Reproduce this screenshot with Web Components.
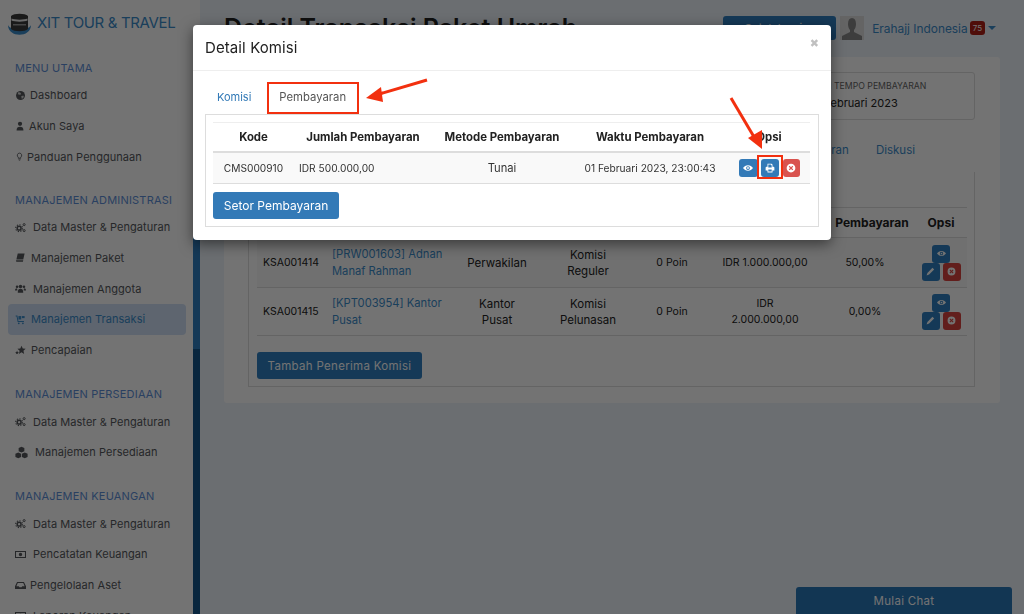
<!DOCTYPE html>
<html>
<head>
<meta charset="utf-8">
<title>Detail Komisi</title>
<style>
    html, body {margin: 0; height: 100%; overflow: hidden;}
    body {font-family: "Inter", "Liberation Sans", sans-serif; background: #fff;}
</style>
</head>
<body>
<app-shell>
    <side-bar slot="side"></side-bar>
    <top-bar slot="top"></top-bar>
    <commission-card slot="main"></commission-card>
</app-shell>
<chat-button></chat-button>
<commission-modal></commission-modal>

<script>
// font awesome style glyphs, drawn by hand
const ICONS = {
    globe: '<circle cx="8" cy="8" r="6.5"/><path fill="#fff" opacity=".75" d="M5 3l3 1 1 2-2 1-3-1zM9 9l3-1 1 2-3 3z"/>',
    user: '<circle cx="8" cy="4.500" r="3.400"/><path d="M2.500 15c0-4.500 2-6 5.500-6s5.500 1.500 5.500 6z"/>',
    bulb: '<path fill="none" stroke="currentColor" stroke-width="1.500" d="M8 2a4 4 0 0 0-2.200 7.300V11h4.400V9.300A4 4 0 0 0 8 2z"/><path d="M6 12h4v1.200H6zM6.800 14h2.400v1H6.800z"/>',
    gears: '<circle cx="6" cy="9" r="2.800" fill="none" stroke="currentColor" stroke-width="2.200"/><circle cx="6" cy="9" r="5" fill="none" stroke="currentColor" stroke-width="1.500" stroke-dasharray="1.900 2"/><circle cx="13.300" cy="3.800" r="1.500" fill="none" stroke="currentColor" stroke-width="1.400"/><circle cx="13.300" cy="12.500" r="1.500" fill="none" stroke="currentColor" stroke-width="1.400"/>',
    book: '<path d="M4 2h10l-2 9H2zM2 12h10l-.5 2H3a1 1 0 0 1-1-2z"/>',
    users: '<circle cx="8" cy="5" r="2.600"/><circle cx="3" cy="5.500" r="1.900"/><circle cx="13" cy="5.500" r="1.900"/><path d="M4 14c0-4 1.500-5.500 4-5.500s4 1.500 4 5.500zM0 11c0-2 1-3.200 3-3.200l.5 3.200zM16 11c0-2-1-3.200-3-3.200l-.5 3.200z"/>',
    cart: '<path d="M1 2h2.500l1.500 8h8v1.500H3.800L2.300 3.500H1z"/><rect x="5" y="3" width="4" height="5"/><rect x="10" y="3" width="4" height="3"/><circle cx="5.500" cy="13.500" r="1.300"/><circle cx="11.500" cy="13.500" r="1.300"/>',
    stars: '<path d="M9.500 1l1.800 4.200 4.200.4-3.200 2.900 1 4.500-3.800-2.400-3.800 2.400 1-4.500L3.500 5.600l4.200-.4z"/><path d="M3 8l.8 2 2 .2-1.500 1.300.5 2-1.800-1.100-1.800 1.100.5-2L.200 10.200l2-.2z"/>',
    cubes: '<path d="M8 1l3.500 1.500v4L8 8 4.500 6.500v-4zM4 8l3.500 1.500v4L4 15 .5 13.500v-4zM12 8l3.500 1.500v4L12 15l-3.500-1.500v-4z"/>',
    money: '<path fill-rule="evenodd" d="M0 3h16v10H0zM1.500 4.500v7h13v-7zM8 5.500a2.500 2.500 0 1 1 0 5 2.500 2.500 0 0 1 0-5z"/>',
    inbox: '<path fill-rule="evenodd" d="M3 3h10l3 6v4H0V9zM4 4.500L2 9h3.500l1 1.500h3l1-1.500H14l-2-4.500z"/>',
    eye: '<path fill-rule="evenodd" d="M8 3.500c3.500 0 6.200 2.200 8 4.500-1.800 2.300-4.500 4.500-8 4.500S1.800 10.300 0 8c1.800-2.300 4.500-4.500 8-4.500zM8 5a3 3 0 1 0 0 6 3 3 0 0 0 0-6z"/><circle cx="8" cy="8" r="1.500"/>',
    print: '<path fill-rule="evenodd" d="M4 1h6.500L12 2.500V6h1.500A1.500 1.500 0 0 1 15 7.500V12h-3v3H4v-3H1V7.500A1.500 1.500 0 0 1 2.500 6H4zM5.300 2.300V7h5.400V3.500H9.500V2.300zM5.300 10.500v3.200h5.400v-3.200z"/>',
    pencil: '<path d="M11.500 1.500l3 3-9 9L1 15l1.500-4.500z"/>',
    cross: '<path fill-rule="evenodd" d="M8 1a7 7 0 1 1 0 14A7 7 0 0 1 8 1zM5.800 4.400L4.400 5.800 6.600 8l-2.200 2.200 1.400 1.400L8 9.400l2.200 2.200 1.400-1.400L9.400 8l2.200-2.200-1.400-1.400L8 6.600z"/>'
};

class FaIcon extends HTMLElement {
    constructor() {
        super();
        this.attachShadow({ mode: 'open' });
    }
    connectedCallback() {
        var size = this.getAttribute('size') || 12;
        this.shadowRoot.innerHTML = `
<style>
    :host {display: inline-flex; width: ${size}px; height: ${size}px; flex: none;}
    svg {width: 100%; height: 100%; fill: currentColor; display: block;}
</style>
<svg viewBox="0 0 16 16">${ICONS[this.getAttribute('name')]}</svg>`
    }
}
customElements.define('fa-icon', FaIcon);

class AppShell extends HTMLElement {
    constructor() {
        super();
        this.attachShadow({ mode: 'open' });
        this.shadowRoot.innerHTML = `
<style>
    :host {display: flex; height: 614px; overflow: hidden;}
    .side {width: 193px; flex: none;}
    .strip {width: 7px; flex: none; background: linear-gradient(#fff 0, #fff 45px, #2f7fc0 45px, #2f7fc0 349px, #16568a 349px);}
    .content {flex: 1; min-width: 0; background: #eef3fa; padding: 16px 24px 0 24px; box-sizing: border-box;}
</style>
<div class="side"><slot name="side"></slot></div>
<div class="strip"></div>
<div class="content">
    <slot name="top"></slot>
    <slot name="main"></slot>
</div>`
    }
}
customElements.define('app-shell', AppShell);

class SideItem extends HTMLElement {
    constructor() {
        super();
        this.attachShadow({ mode: 'open' });
    }
    connectedCallback() {
        var active = this.hasAttribute('active');
        var gap = this.getAttribute('gap') || 7;
        this.shadowRoot.innerHTML = `
<style>
    :host {display: flex; align-items: center; height: 30.750px; margin: 0 7px 0 8px; padding-left: 7px;
        gap: ${gap}px; font-size: 11px; letter-spacing: .05px; color: ${active ? '#3b8ccb' : '#55585c'};
        background: ${active ? '#d0e0f5' : 'none'}; border-radius: 4px; white-space: nowrap;}
</style>
<fa-icon name="${this.getAttribute('icon')}" size="${this.getAttribute('size') || 11}"></fa-icon>
<span><slot></slot></span>`
    }
}
customElements.define('side-item', SideItem);

class SideBar extends HTMLElement {
    constructor() {
        super();
        this.attachShadow({ mode: 'open' });
        this.shadowRoot.innerHTML = `
<style>
    :host {display: block; height: 614px; overflow: hidden; background: #fff;}
    .brand {display: flex; align-items: center; gap: 6px; height: 45px; padding-left: 8px; color: #3b8ccb;
        font-size: 15px; letter-spacing: -.35px; white-space: nowrap;}
    .brand svg {width: 23px; height: 24px; flex: none;}
    h4 {margin: 0; font-size: 11px; font-weight: 400; color: #5d8fd8; letter-spacing: .2px; padding-left: 15px;
        line-height: 16px; white-space: nowrap;}
    .group {margin-bottom: 20.600px;}
    .group h4 {margin-bottom: 4px;}
    .first {margin-top: 15px; margin-bottom: 19.600px;}
</style>
<div class="brand">
    <svg viewBox="0 0 23 24">
        <path fill="#3b8ccb" d="M0 14c0 13 23 13 23 0-2 6-21 6-23 0z"/>
        <path fill="#3a3a3a" d="M3 5c3-3 14-3 17 0v13c-3 3-14 3-17 0z"/>
        <path fill="#e8e8e8" d="M3.500 7.500c3 1.500 13 1.500 16 0v2c-3 1.500-13 1.500-16 0z"/>
        <path fill="#999" d="M5 13h13v1.500H5z"/>
    </svg>
    XIT TOUR &amp; TRAVEL
</div>
<div class="group first">
    <h4>MENU UTAMA</h4>
    <side-item icon="globe" gap="4">Dashboard</side-item>
    <side-item icon="user" gap="4" size="10">Akun Saya</side-item>
    <side-item icon="bulb" gap="3" size="9">Panduan Penggunaan</side-item>
</div>
<div class="group">
    <h4>MANAJEMEN ADMINISTRASI</h4>
    <side-item icon="gears">Data Master &amp; Pengaturan</side-item>
    <side-item icon="book" gap="5">Manajemen Paket</side-item>
    <side-item icon="users">Manajemen Anggota</side-item>
    <side-item icon="cart" gap="5" active>Manajemen Transaksi</side-item>
    <side-item icon="stars" gap="5">Pencapaian</side-item>
</div>
<div class="group">
    <h4>MANAJEMEN PERSEDIAAN</h4>
    <side-item icon="gears">Data Master &amp; Pengaturan</side-item>
    <side-item icon="cubes" size="13">Manajemen Persediaan</side-item>
</div>
<div class="group">
    <h4>MANAJEMEN KEUANGAN</h4>
    <side-item icon="gears">Data Master &amp; Pengaturan</side-item>
    <side-item icon="money">Pencatatan Keuangan</side-item>
    <side-item icon="inbox" gap="4">Pengelolaan Aset</side-item>
    <side-item icon="money">Laporan Keuangan</side-item>
</div>`
    }
}
customElements.define('side-bar', SideBar);

class TopBar extends HTMLElement {
    constructor() {
        super();
        this.attachShadow({ mode: 'open' });
        this.shadowRoot.innerHTML = `
<style>
    :host {display: flex; align-items: center; height: 24px; margin-bottom: 17px; white-space: nowrap;}
    h1 {margin: 0; font-size: 25px; font-weight: 600; color: #222; flex: 1;}
    button {border: 0; border-radius: 3px; width: 113px; height: 24px; background: #2f7fc0; color: #fff;
        font: 11px "Inter", sans-serif; margin-right: 4px;}
    .avatar {width: 24px; height: 24px; background: #ddd; overflow: hidden; margin-right: 8px;}
    .avatar svg {display: block; width: 24px; height: 24px;}
    .name {font-size: 11.900px; color: #3b8ccb;}
    .badge {background: #b02018; color: #fff; font-size: 8px; padding: 2px 3px; border-radius: 3px; margin: 0 3px 0 2px;}
    .caret {border: 4px solid transparent; border-top-color: #3b8ccb; border-bottom: 0; margin-right: 4px;}
</style>
<h1>Detail Transaksi Paket Umrah</h1>
<button>Cetak Invoice</button>
<div class="avatar"><svg viewBox="0 0 24 24"><path fill="#888" d="M8 8c0-4 1.500-6 4-6s4 2 4 6c0 3-1 5-2 6v2l8 4v4H2v-4l8-4v-2c-1-1-2-3-2-6z"/></svg></div>
<span class="name">Erahajj Indonesia</span>
<span class="badge">75</span>
<span class="caret"></span>`
    }
}
customElements.define('top-bar', TopBar);

class IconBtn extends HTMLElement {
    constructor() {
        super();
        this.attachShadow({ mode: 'open' });
    }
    connectedCallback() {
        var color = this.getAttribute('tone') == 'red' ? 'var(--btn-red, #d9534f)' : 'var(--btn-blue, #337ab7)';
        this.shadowRoot.innerHTML = `
<style>
    :host {display: inline-flex; align-items: center; justify-content: center; width: ${this.getAttribute('w') || 18}px; height: 18px;
        background: ${color}; color: #fff; border-radius: 3px; box-sizing: border-box;}
</style>
<fa-icon name="${this.getAttribute('icon')}" size="${this.getAttribute('size') || 10}"></fa-icon>`
    }
}
customElements.define('icon-btn', IconBtn);

class CommissionCard extends HTMLElement {
    constructor() {
        super();
        this.attachShadow({ mode: 'open' });
        this.shadowRoot.innerHTML = `
<style>
    :host {display: block; height: 346px; background: #fff; border-radius: 3px; padding: 15px 25px 16px 24px; box-sizing: border-box;
        font-size: 10.500px; color: #222; --btn-blue: #2f7fc0; --btn-red: #d9443f;}
    .due {margin-left: 500px; height: 48px; border: 1px solid #ddd; border-radius: 3px; box-sizing: border-box;
        padding: 6px 10px 6px 54px; white-space: nowrap;}
    .due small {display: block; font-size: 8.700px; color: #666; line-height: 14px;}
    .due b {font-weight: 400; font-size: 11px; line-height: 20px; display: block; margin-left: 7px;}
    .tabs {display: flex; justify-content: flex-end; gap: 27px; padding: 23px 60px 0 0; height: 17px; color: #3b8ccb; font-size: 11.500px;}
    .panel {margin-top: 12px; height: 215px; border: 1px solid #ddd; border-top: 0; padding: 35px 8px 0 8px; box-sizing: border-box;}
    table {border-collapse: collapse; width: 710px; table-layout: fixed; text-align: center;}
    th {height: 29px; padding: 0; font-size: 12px; font-weight: 700; color: #222; border-top: 1px solid #ddd; border-bottom: 1px solid #ddd; white-space: nowrap;}
    th.pay {padding-left: 14px;}
    td {padding: 0; line-height: 16px; border-bottom: 1px solid #ddd; box-sizing: border-box; white-space: nowrap;}
    td.word {font-size: 11.500px;}
    tr.alt td {background: #f9f9f9; height: 50px;}
    tr.plain td {height: 48px;}
    a {color: #3b8ccb; font-size: 11.200px;}
    td.left {text-align: left; padding-left: 6px;}
    td.first {text-align: left; padding-left: 6px;}
    .opts {display: flex; flex-wrap: wrap; justify-content: center; gap: 0 3px; width: 40px; margin: auto;}
    .opts icon-btn[icon="eye"] {margin: 0 10px;}
    button {margin-top: 16px; width: 165px; height: 27px; background: #2f7fc0; color: #fff; border: 0; border-radius: 3px; font: 11.500px "Inter", sans-serif; letter-spacing: .3px; display: block;}
</style>
<div class="due"><small>JATUH TEMPO PEMBAYARAN</small><b>01 Februari 2023</b></div>
<div class="tabs"><span>Pembayaran</span><span>Diskusi</span></div>
<div class="panel">
<table>
    <colgroup><col style="width:69px"><col style="width:121px"><col style="width:100px"><col style="width:82px"><col style="width:86px"><col style="width:100px"><col style="width:100px"><col style="width:52px"></colgroup>
    <tr><th>Kode</th><th>Penerima</th><th>Jenis</th><th>Komisi</th><th>Poin</th><th>Jumlah</th><th class="pay">Pembayaran</th><th>Opsi</th></tr>
    <tr class="alt"><td class="first">KSA001414</td><td class="left"><a>[PRW001603] Adnan<br>Manaf Rahman</a></td><td class="word">Perwakilan</td><td class="word">Komisi<br>Reguler</td><td>0 Poin</td><td>IDR 1.000.000,00</td><td>50,00%</td>
        <td><div class="opts"><icon-btn icon="eye" size="9"></icon-btn><icon-btn icon="pencil" size="9"></icon-btn><icon-btn icon="cross" tone="red" size="9"></icon-btn></div></td></tr>
    <tr class="plain"><td class="first">KSA001415</td><td class="left"><a>[KPT003954] Kantor<br>Pusat</a></td><td class="word">Kantor<br>Pusat</td><td class="word">Komisi<br>Pelunasan</td><td>0 Poin</td><td>IDR<br>2.000.000,00</td><td>0,00%</td>
        <td><div class="opts"><icon-btn icon="eye" size="9"></icon-btn><icon-btn icon="pencil" size="9"></icon-btn><icon-btn icon="cross" tone="red" size="9"></icon-btn></div></td></tr>
</table>
<button>Tambah Penerima Komisi</button>
</div>`
    }
}
customElements.define('commission-card', CommissionCard);

class ChatButton extends HTMLElement {
    constructor() {
        super();
        this.attachShadow({ mode: 'open' });
        this.shadowRoot.innerHTML = `
<style>
    :host {position: fixed; left: 796px; top: 587px; width: 216px; height: 27px; background: #2878b8; color: #fff;
        border-radius: 3px 3px 0 0; font-size: 11.500px; display: flex; align-items: center; justify-content: center; letter-spacing: .3px;}
</style>
Mulai Chat`
    }
}
customElements.define('chat-button', ChatButton);

class CommissionModal extends HTMLElement {
    constructor() {
        super();
        this.attachShadow({ mode: 'open' });
        this.shadowRoot.innerHTML = `
<style>
    :host {position: fixed; inset: 0; display: block; background: rgba(0,0,0,.55); font-size: 11px; color: #333;}
    .dialog {position: absolute; left: 193px; top: 25px; width: 638px; height: 215px; background: #fff; border-radius: 4px;
        box-shadow: 0 4px 14px rgba(0,0,0,.5); display: flex; flex-direction: column;}
    header {height: 46px; box-sizing: border-box; display: flex; align-items: center; justify-content: space-between; padding: 0 12px; border-bottom: 1px solid #eee; flex: none;}
    h3 {margin: 0; font-size: 15px; font-weight: 400; color: #222; letter-spacing: .1px;}
    .close {color: #c0c0c0; font: 700 11px "DejaVu Sans", sans-serif; margin: -8px 0 0 0;}
    .body {padding: 11px 12px 0 12px; flex: 1;}
    .tabs {display: flex; height: 32px;}
    .tab {padding: 8px 12px 0 12px; color: #337ab7; font-size: 11px; box-sizing: border-box;}
    .tab.on {color: #555; margin-left: 3px; padding-left: 13px; font-size: 11.300px;}
    .panel {border: 1px solid #ddd; height: 113px; padding: 7px 7px 0 7px; box-sizing: border-box;}
    table {border-collapse: collapse; width: 597px; table-layout: fixed; text-align: center;}
    th {height: 28px; padding: 0; font-size: 11.400px; font-weight: 700; color: #222; border-top: 1px solid #eee; border-bottom: 2px solid #ddd;}
    td {height: 30px; padding: 0; font-size: 10.200px; background: #f9f9f9; border-bottom: 1px solid #ddd; white-space: nowrap;}
    td.word {font-size: 11.200px;}
    td.left {text-align: left; padding-left: 5px;}
    .opts {display: flex; justify-content: center; gap: 3px;}
    .opts icon-btn[tone="red"] {margin-left: 1px;}
    button {margin-top: 8px; width: 126px; height: 27px; background: #337ab7; color: #fff; border: 0; border-radius: 3px; font: 12px "Inter", sans-serif; display: block;}
    svg.marks {position: absolute; left: 0; top: 0; width: 1024px; height: 614px; pointer-events: none;}
</style>
<div class="dialog">
    <header><h3>Detail Komisi</h3><span class="close">✖</span></header>
    <div class="body">
        <div class="tabs"><div class="tab">Komisi</div><div class="tab on">Pembayaran</div></div>
        <div class="panel">
            <table>
                <colgroup><col style="width:81px"><col style="width:138px"><col style="width:140px"><col style="width:156px"><col style="width:82px"></colgroup>
                <tr><th>Kode</th><th>Jumlah Pembayaran</th><th>Metode Pembayaran</th><th>Waktu Pembayaran</th><th>Opsi</th></tr>
                <tr><td>CMS000910</td><td class="left">IDR 500.000,00</td><td class="word">Tunai</td><td>01 Februari 2023, 23:00:43</td>
                    <td><div class="opts"><icon-btn icon="eye" size="10" w="19"></icon-btn><icon-btn icon="print" size="10"></icon-btn><icon-btn icon="cross" tone="red" size="10" w="17"></icon-btn></div></td></tr>
            </table>
            <button>Setor Pembayaran</button>
        </div>
    </div>
</div>
<!-- red annotation marks drawn over the screenshot -->
<svg class="marks" viewBox="0 0 1024 614">
    <rect x="268" y="83" width="90" height="30" fill="none" stroke="#f2300f" stroke-width="2"/>
    <rect x="758" y="156" width="24" height="22" fill="none" stroke="#f2300f" stroke-width="2"/>
    <path d="M427 80L376 95" stroke="#f2300f" stroke-width="3"/>
    <path d="M366 98L381 87L383 102Z" fill="#f2300f"/>
    <path d="M731 98L757 142" stroke="#f2300f" stroke-width="3"/>
    <path d="M762 149L748 138L762 130Z" fill="#f2300f"/>
</svg>`
    }
}
customElements.define('commission-modal', CommissionModal);
</script>
</body>
</html>
